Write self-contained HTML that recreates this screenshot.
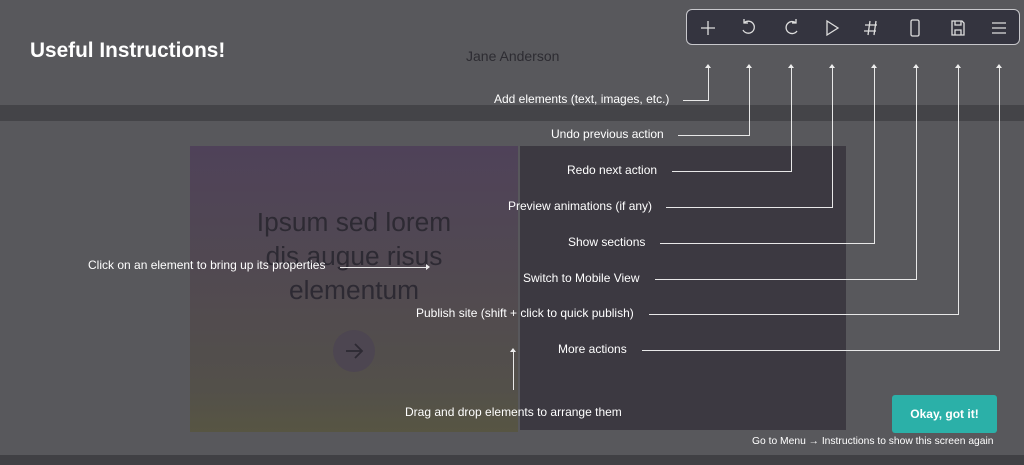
<!DOCTYPE html>
<html><head><style>
body{margin:0;width:1024px;height:465px;overflow:hidden;background:#58585c;font-family:"Liberation Sans",sans-serif;position:relative}
.a{position:absolute}
.t{position:absolute;color:#fff;font-size:12px;white-space:nowrap}
.l{position:absolute;background:#e8e8e8}
</style></head><body>
<div class="a" style="left:0;top:105px;width:1024px;height:16px;background:#444448"></div>
<div class="a" style="left:0;top:455px;width:1024px;height:10px;background:#404044"></div>
<div class="a" style="left:190px;top:146px;width:328px;height:286px;background:linear-gradient(#4f4259,#53504a 85%,#575543)"></div>
<div class="a" style="left:520px;top:146px;width:326px;height:284px;background:#3c3941"></div>
<div class="a" style="left:190px;top:205px;width:328px;text-align:center;font-size:26.3px;line-height:34px;color:#2d2a33">Ipsum sed lorem<br>dis augue risus<br>elementum</div>
<div class="a" style="left:333px;top:330px;width:42px;height:42px;border-radius:50%;background:#4d4651"></div>
<svg class="a" style="left:333px;top:330px" width="42" height="42" fill="none" stroke="#2d2a33" stroke-width="1.8"><path d="M13 21h16M22 14l7 7-7 7"/></svg>
<div class="a" style="left:466px;top:48px;font-size:14px;color:#2d2c32">Jane Anderson</div>
<div class="a" style="left:30px;top:39px;font-size:20.8px;font-weight:bold;color:#fff">Useful Instructions!</div>
<div class="a" style="left:686px;top:9px;width:332px;height:34px;border:1.5px solid #c8c8cc;border-radius:6px;background:#34343f"></div>
<svg class="a" style="left:686px;top:9px" width="336" height="38" fill="none" stroke="#ddd" stroke-width="1.3">
<path d="M22 12v14M15 19h14"/>
<path d="M58 14a6 6 0 1 1-1 7M58 10v4h4"/>
<path d="M110 14a6 6 0 1 0 1 8M110 10v4h-4"/>
<path d="M141 12l11 7-11 7z"/>
<path d="M184 12l-2 14M190 12l-2 14M179 16h12M178 22h12"/>
<rect x="225" y="11" width="8" height="16" rx="1.5"/>
<path d="M266 12h10l2 2v12h-12zM269 12v4h6v-4M269 26v-5h6v5"/>
<path d="M306 14h14M306 19h14M306 24h14"/>
</svg>
<div class="l" style="left:683px;top:100px;width:25px;height:1px"></div>
<div class="l" style="left:708px;top:66px;width:1px;height:35px"></div>
<div class="l" style="left:678px;top:135px;width:71px;height:1px"></div><div class="l" style="left:749px;top:66px;width:1px;height:70px"></div>
<div class="l" style="left:672px;top:171px;width:119px;height:1px"></div><div class="l" style="left:791px;top:66px;width:1px;height:106px"></div>
<div class="l" style="left:666px;top:207px;width:166px;height:1px"></div><div class="l" style="left:832px;top:66px;width:1px;height:142px"></div>
<div class="l" style="left:660px;top:243px;width:214px;height:1px"></div><div class="l" style="left:874px;top:66px;width:1px;height:178px"></div>
<div class="l" style="left:655px;top:279px;width:261px;height:1px"></div><div class="l" style="left:916px;top:66px;width:1px;height:214px"></div>
<div class="l" style="left:649px;top:314px;width:309px;height:1px"></div><div class="l" style="left:958px;top:66px;width:1px;height:249px"></div>
<div class="l" style="left:642px;top:350px;width:357px;height:1px"></div><div class="l" style="left:999px;top:66px;width:1px;height:285px"></div>
<svg class="a" style="left:0;top:0" width="1024" height="465" fill="#eee">
<path d="M705 68l3-4 3 4zM746 68l3-4 3 4zM788 68l3-4 3 4zM829 68l3-4 3 4zM871 68l3-4 3 4zM913 68l3-4 3 4zM955 68l3-4 3 4zM996 68l3-4 3 4zM510 352l3-4 3 4zM426 264l4 3-4 3z"/>
</svg>
<div class="l" style="left:513px;top:350px;width:1px;height:40px"></div>
<div class="l" style="left:340px;top:267px;width:88px;height:1px"></div>
<div class="t" style="left:494px;top:92px">Add elements (text, images, etc.)</div>
<div class="t" style="left:551px;top:127px">Undo previous action</div>
<div class="t" style="left:567px;top:163px">Redo next action</div>
<div class="t" style="left:508px;top:199px">Preview animations (if any)</div>
<div class="t" style="left:568px;top:235px">Show sections</div>
<div class="t" style="left:523px;top:271px">Switch to Mobile View</div>
<div class="t" style="left:416px;top:306px">Publish site (shift + click to quick publish)</div>
<div class="t" style="left:558px;top:342px">More actions</div>
<div class="t" style="left:88px;top:258px">Click on an element to bring up its properties</div>
<div class="t" style="left:405px;top:405px">Drag and drop elements to arrange them</div>
<div class="a" style="left:892px;top:395px;width:105px;height:38px;border-radius:3px;background:#2bb0a8;color:#fff;font-size:12px;font-weight:bold;text-align:center;line-height:38px">Okay, got it!</div>
<div class="t" style="left:752px;top:436px;font-size:10.3px">Go to Menu → Instructions to show this screen again</div>
</body></html>
